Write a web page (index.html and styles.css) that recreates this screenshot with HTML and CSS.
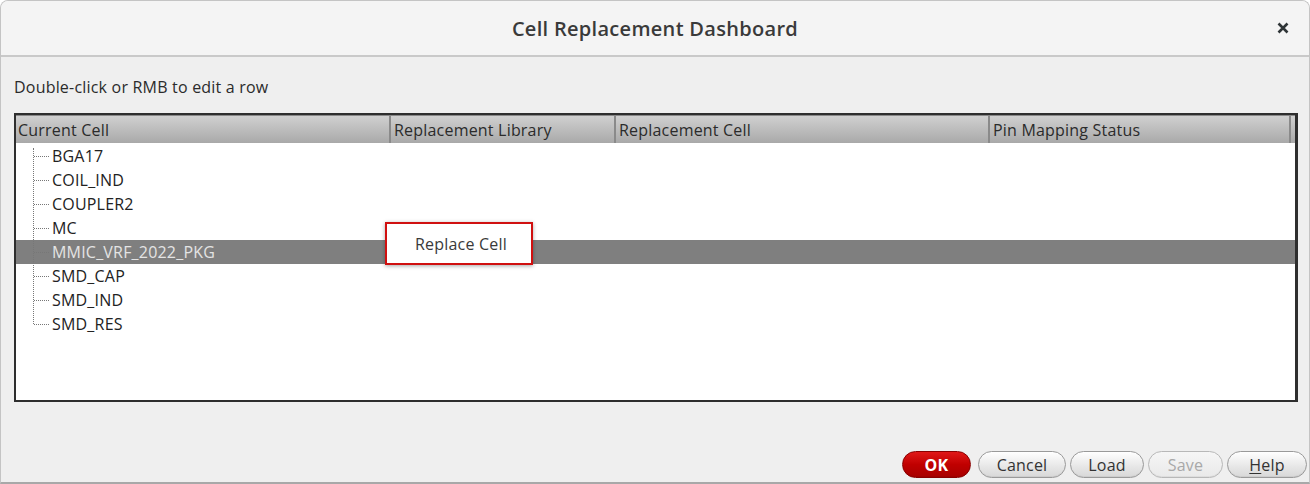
FILE: index.html
```html
<!DOCTYPE html>
<html>
<head>
<meta charset="utf-8">
<link rel="stylesheet" href="styles.css">
</head>
<body>
<div class="window">
  <div class="titlebar">
    <div class="title-spacer"></div>
    <div class="title">Cell Replacement Dashboard</div>
    <div class="title-actions">
      <span class="close">
        <svg width="14" height="14" viewBox="0 0 14 14"><path d="M2.5 2.5 L11.5 11.5 M11.5 2.5 L2.5 11.5" stroke="#2e3436" stroke-width="2.6" stroke-linecap="butt"/></svg>
      </span>
    </div>
  </div>
  <div class="content">
    <div class="hint">Double-click or RMB to edit a row</div>
    <div class="table">
      <div class="thead">
        <div class="th c1">Current Cell</div>
        <div class="th c2">Replacement Library</div>
        <div class="th c3">Replacement Cell</div>
        <div class="th c4">Pin Mapping Status</div>
        <div class="th c5"></div>
      </div>
      <div class="tbody">
        <div class="tree-line"></div>
        <div class="row"><span class="branch"></span><span class="name">BGA17</span></div>
        <div class="row"><span class="branch"></span><span class="name">COIL_IND</span></div>
        <div class="row"><span class="branch"></span><span class="name">COUPLER2</span></div>
        <div class="row"><span class="branch"></span><span class="name">MC</span></div>
        <div class="row selected"><span class="branch"></span><span class="name">MMIC_VRF_2022_PKG</span></div>
        <div class="row"><span class="branch"></span><span class="name">SMD_CAP</span></div>
        <div class="row"><span class="branch"></span><span class="name">SMD_IND</span></div>
        <div class="row"><span class="branch"></span><span class="name">SMD_RES</span></div>
        <div class="menu"><div class="menu-item">Replace Cell</div></div>
      </div>
    </div>
    <div class="buttons">
      <button class="btn ok">OK</button>
      <button class="btn cancel">Cancel</button>
      <button class="btn load">Load</button>
      <button class="btn save" disabled>Save</button>
      <button class="btn help"><u>H</u>elp</button>
    </div>
  </div>
</div>
</body>
</html>
```
FILE: styles.css
```css
* { box-sizing: border-box; }
html, body { margin: 0; padding: 0; background: #ffffff; }
body { font-family: "Open Sans", "Noto Sans", sans-serif; color: #2b2b2b; }

.window {
  width: 1310px;
  height: 484px;
  background: #efefef;
  border-top-left-radius: 8px;
  border-top-right-radius: 8px;
  border: 1px solid #c4c4c4;
  border-bottom: 2px solid #a8a8a8;
  overflow: hidden;
  display: flex;
  flex-direction: column;
}

.titlebar {
  height: 56px;
  flex: none;
  background: #f4f4f4;
  border-bottom: 2px solid #c9c9c9;
  display: grid;
  grid-template-columns: 1fr auto 1fr;
  align-items: center;
}
.title {
  font-size: 20px;
  font-weight: 600;
  letter-spacing: 0.3px;
  color: #3a3a3a;
}
.title-actions { display: flex; justify-content: flex-end; padding-right: 19px; }
.close { display: flex; width: 14px; height: 14px; }

.content {
  flex: 1;
  display: flex;
  flex-direction: column;
  padding: 20px 0 0 13px;
  font-size: 16px;
  letter-spacing: 0.2px;
}
.hint {
  font-size: 16px;
  line-height: 20px;
  color: #2b2b2b;
}

.table {
  margin-top: 16px;
  width: 1284px;
  height: 289px;
  border: 2px solid #2e2e2e;
  border-right-width: 3px;
  background: #ffffff;
  display: flex;
  flex-direction: column;
}
.thead {
  height: 28px;
  flex: none;
  display: flex;
  background: linear-gradient(#d0d0d0, #a9a9a9);
  border-top: 1px solid #888;
}
.th {
  font-size: 16px;
  line-height: 28px;
  padding-left: 3px;
  color: #2b2b2b;
  border-right: 2px solid #8a8a8a;
  white-space: nowrap;
  overflow: hidden;
}
.c1 { width: 375px; padding-left: 2px; }
.c2 { width: 225px; }
.c3 { width: 374px; }
.c4 { width: 301px; }
.c5 { flex: 1; border-right: none; }

.tbody {
  position: relative;
  flex: 1;
  padding-top: 1px;
}
.tree-line {
  position: absolute;
  left: 17px;
  top: 5px;
  height: 176px;
  border-left: 1px dotted #777;
}
.row {
  height: 24px;
  display: flex;
  align-items: center;
  font-size: 16px;
  color: #222;
}
.row .branch {
  width: 15px;
  margin-left: 18px;
  margin-right: 3px;
  border-top: 1px dotted #777;
}
.row.selected { background: #7f7f7f; }
.row.selected .name { color: #e4e4e4; }

.menu {
  position: absolute;
  left: 369px;
  top: 79px;
  width: 148px;
  height: 43px;
  background: #ffffff;
  border: 2px solid #d01010;
  box-shadow: 0 1px 4px rgba(0,0,0,0.35);
  display: flex;
  align-items: center;
}
.menu-item {
  padding-left: 28px;
  font-size: 16px;
  color: #3a3a3a;
}

.buttons {
  margin-top: auto;
  margin-bottom: 4px;
  display: flex;
  justify-content: flex-end;
  gap: 4px;
  padding-right: 2px;
}
.btn {
  height: 27px;
  border-radius: 14px;
  border: 1px solid #9a9a9a;
  background: linear-gradient(#ffffff, #e6e6e6 60%, #d8d8d8);
  font-family: "Open Sans", "Noto Sans", sans-serif;
  font-size: 16px;
  letter-spacing: 0.2px;
  color: #333;
  padding: 0;
  box-shadow: inset 0 -1px 0 rgba(0,0,0,0.05);
}
.btn u { text-decoration: underline; text-underline-offset: 2px; }
.ok {
  width: 69px;
  margin-right: 3px;
  background: linear-gradient(#e01818, #c00000 50%, #a80000);
  border-color: #8a0000;
  color: #ffffff;
  font-weight: 700;
}
.cancel { width: 88px; }
.load { width: 74px; }
.save { width: 75px; color: #a8a8a8; background: linear-gradient(#f6f6f6, #e9e9e9); border-color: #b8b8b8; }
.help { width: 80px; }
```
